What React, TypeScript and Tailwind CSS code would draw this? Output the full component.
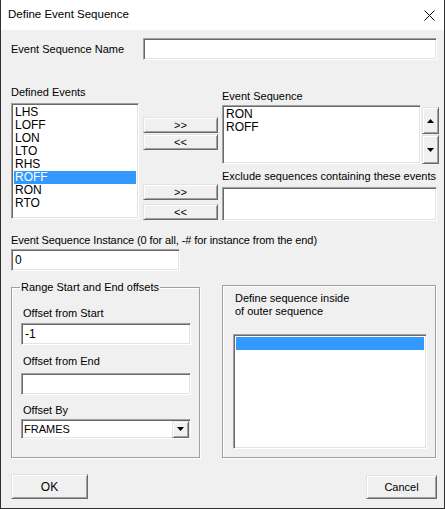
import React from "react";

const sunken =
  "bg-white border border-t-[#a0a0a0] border-l-[#a0a0a0] border-b-white border-r-white shadow-[inset_1px_1px_0_#696969,inset_-1px_-1px_0_#e3e3e3]";
const raised =
  "bg-[#f0f0f0] border border-t-[#e3e3e3] border-l-[#e3e3e3] border-b-[#696969] border-r-[#696969] shadow-[inset_1px_1px_0_#ffffff,inset_-1px_-1px_0_#a0a0a0]";
const etched = "border border-[#a0a0a0] shadow-[inset_1px_1px_0_#ffffff,1px_1px_0_#ffffff]";

function Btn({ label, cls }: { label: string; cls: string }) {
  return (
    <div className={`${raised} ${cls} flex items-center justify-center leading-none`}>
      {label}
    </div>
  );
}

function ArrowDown() {
  return (
    <svg width="7" height="4" viewBox="0 0 7 4">
      <path d="M0 0H7L3.5 4Z" fill="#000" />
    </svg>
  );
}

function ArrowUp() {
  return (
    <svg width="7" height="4" viewBox="0 0 7 4">
      <path d="M0 4H7L3.5 0Z" fill="#000" />
    </svg>
  );
}

const defined = ["LHS", "LOFF", "LON", "LTO", "RHS", "ROFF", "RON", "RTO"];

export default function App() {
  return (
    <div className="w-[445px] h-[509px] flex flex-col bg-[#f0f0f0] border-x border-b border-[#2f2f2f] font-['Liberation_Sans',Arial,sans-serif] text-[11px] text-black overflow-hidden">
      <div className="h-[30px] shrink-0 bg-white flex items-center justify-between pl-[7px] pr-[9px]">
        <span className="text-[11.5px]">Define Event Sequence</span>
        <svg width="11" height="11" viewBox="0 0 11 11">
          <path d="M0.5 0.5L10.5 10.5M10.5 0.5L0.5 10.5" stroke="#000" strokeWidth="1" />
        </svg>
      </div>

      <div className="flex-1 flex flex-col pl-[10px] pr-[7px] pt-[8px]">
        {/* Row 1 */}
        <div className="flex items-center h-[22px]">
          <span>Event Sequence Name</span>
          <div className={`${sunken} ml-auto w-[294px] h-[22px]`} />
        </div>

        {/* Row 2 */}
        <div className="flex items-start mt-[25px]">
          <div className="flex flex-col w-[128px]">
            <div className="h-[14px] leading-[14px]">Defined Events</div>
            <div className={`${sunken} mt-[4px] h-[116px] pt-[2px] px-[2px]`}>
              {defined.map((d) => (
                <div
                  key={d}
                  className={`h-[13px] leading-[13px] pl-[1px] text-[12px] ${
                    d === "ROFF" ? "bg-[#3399ff] text-white" : ""
                  }`}
                >
                  {d}
                </div>
              ))}
            </div>
          </div>

          <div className="flex flex-col w-[75px] ml-[4px] pt-[32px]">
            <Btn label=">>" cls="h-[16px]" />
            <Btn label="<<" cls="h-[16px] mt-[1px]" />
            <Btn label=">>" cls="h-[16px] mt-[34px]" />
            <Btn label="<<" cls="h-[16px] mt-[4px]" />
          </div>

          <div className="flex flex-col ml-[4px] flex-1">
            <div className="h-[14px] leading-[14px] mt-[4px]">Event Sequence</div>
            <div className="flex mt-[2px]">
              <div className={`${sunken} w-[199px] h-[59px] pt-[2px] px-[2px]`}>
                <div className="h-[13px] leading-[13px] pl-[1px] text-[12px]">RON</div>
                <div className="h-[13px] leading-[13px] pl-[1px] text-[12px]">ROFF</div>
              </div>
              <div className="flex flex-col ml-[1px] mr-[-2px]">
                <div className={`${raised} w-[17px] h-[27px] mt-[2px] flex items-center justify-center`}>
                  <ArrowUp />
                </div>
                <div className={`${raised} w-[17px] h-[29px] mt-[1px] flex items-center justify-center`}>
                  <ArrowDown />
                </div>
              </div>
            </div>
            <div className="h-[14px] leading-[14px] mt-[5px] whitespace-nowrap">
              Exclude sequences containing these events
            </div>
            <div className={`${sunken} mt-[4px] h-[34px] w-[215px]`} />
          </div>
        </div>

        {/* Row 3 */}
        <div className="h-[14px] leading-[14px] mt-[12px] whitespace-nowrap tracking-[-0.1px]">
          Event Sequence Instance (0 for all, -# for instance from the end)
        </div>
        <div className={`${sunken} mt-[2px] w-[169px] h-[22px] flex items-center pl-[3px] text-[12px]`}>
          0
        </div>

        {/* Row 4 */}
        <div className="flex items-end mt-[14px]">
          <div className={`${etched} relative w-[189px] h-[171px] flex flex-col pl-[9px] pt-[18px]`}>
            <span className="absolute left-[8px] top-[-8px] px-[1px] bg-[#f0f0f0] leading-[14px]">
              Range Start and End offsets
            </span>
            <div className="h-[14px] leading-[14px] ml-[2px]">Offset from Start</div>
            <div className={`${sunken} mt-[3px] w-[170px] h-[22px] flex items-center pl-[3px] text-[12px]`}>
              -1
            </div>
            <div className="h-[14px] leading-[14px] ml-[2px] mt-[9px]">Offset from End</div>
            <div className={`${sunken} mt-[5px] w-[170px] h-[22px]`} />
            <div className="h-[14px] leading-[14px] ml-[2px] mt-[8px]">Offset By</div>
            <div className={`${sunken} mt-[2px] w-[170px] h-[20px] flex items-center pl-[2px] pr-[1px]`}>
              <span className="flex-1">FRAMES</span>
              <div className={`${raised} w-[17px] h-[17px] flex items-center justify-center`}>
                <ArrowDown />
              </div>
            </div>
          </div>

          <div className={`${etched} ml-[22px] w-[214px] h-[173px] flex flex-col pl-[10px] pt-[6px]`}>
            <div className="ml-[2px] leading-[13px]">
              <div>Define sequence inside</div>
              <div>of outer sequence</div>
            </div>
            <div className={`${sunken} mt-[16px] w-[194px] h-[115px] p-[2px]`}>
              <div className="h-[13px] bg-[#3399ff]" />
            </div>
          </div>
        </div>

        {/* Buttons */}
        <div className="flex justify-between mt-[16px]">
          <Btn label="OK" cls="w-[77px] h-[25px] text-[12px]" />
          <Btn label="Cancel" cls="w-[71px] h-[24px] mt-[1px]" />
        </div>
      </div>
    </div>
  );
}
